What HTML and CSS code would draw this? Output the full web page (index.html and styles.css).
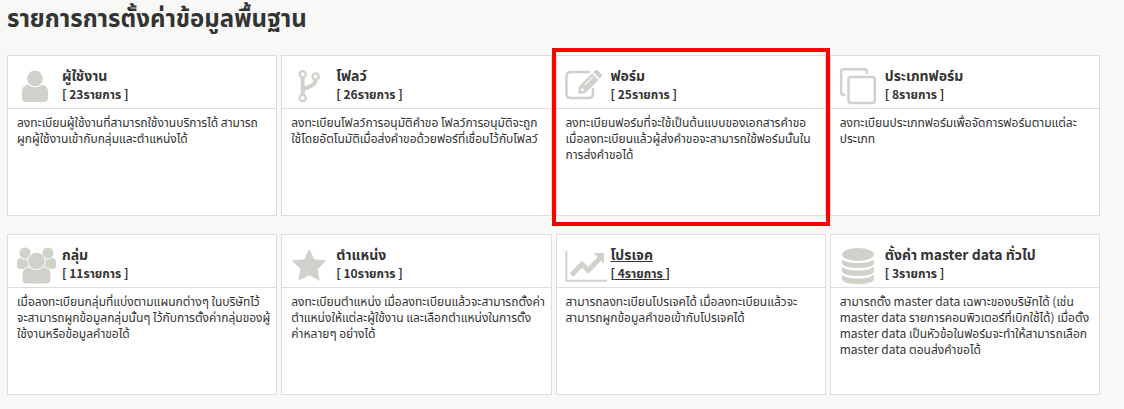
FILE: index.html
```html
<!DOCTYPE html>
<html lang="th">
<head>
    <meta charset="UTF-8">
    <title>รายการการตั้งค่าข้อมูลพื้นฐาน</title>
    <link rel="stylesheet" href="styles.css">
</head>
<body>
    <main>
        <h1>รายการการตั้งค่าข้อมูลพื้นฐาน</h1>
        <div class="cards">
            <section class="card">
                <header>
                    <svg class="icon" viewBox="0 0 42 42">
                        <path d="M6 33V27C6 22 9 20 12 20Q19 24 26 20C29 20 32 22 32 27V33Q32 37 28 37H10Q6 37 6 33Z"/>
                        <circle class="halo" cx="19" cy="13.5" r="8.3"/>
                    </svg>
                    <div class="name">
                        <h2><a href="#">ผู้ใช้งาน</a></h2>
                        <p>[<a href="#"> 23รายการ </a>]</p>
                    </div>
                </header>
                <p class="text">ลงทะเบียนผู้ใช้งานที่สามารถใช้งานบริการได้ สามารถ<br>ผูกผู้ใช้งานเข้ากับกลุ่มและตำแหน่งได้</p>
            </section>
            <section class="card">
                <header>
                    <svg class="icon" viewBox="0 0 42 42">
                        <path class="line branch" d="M12.7 12V30M25.7 14C25.7 22 18 20.5 12.7 25"/>
                        <g class="line ring">
                            <circle cx="12.7" cy="9.3" r="3.1"/>
                            <circle cx="25.7" cy="11.5" r="3.1"/>
                            <circle cx="12.7" cy="33" r="3.1"/>
                        </g>
                    </svg>
                    <div class="name">
                        <h2><a href="#">โฟลว์</a></h2>
                        <p>[<a href="#"> 26รายการ </a>]</p>
                    </div>
                </header>
                <p class="text">ลงทะเบียนโฟลว์การอนุมัติคำขอ โฟลว์การอนุมัติจะถูก<br>ใช้โดยอัตโนมัติเมื่อส่งคำขอด้วยฟอร์ที่เชื่อมไว้กับโฟลว์</p>
            </section>
            <section class="card current">
                <header>
                    <svg class="icon" viewBox="0 0 42 42">
                        <path class="line" d="M25 7H6Q1.4 7 1.4 11.6V28.4Q1.4 33 6 33H23.5Q28 33 28 28.4V23"/>
                        <path d="M13 29L14 21.5L27 8.5L33.5 15L20.5 28ZM28.3 7.2L30.3 5.3Q31.5 4.3 32.7 5.3L36.5 9.2Q37.5 10.4 36.5 11.6L34.7 13.6Z"/>
                        <path class="cut" d="M16.5 22.5L19.5 25.5L16 26.3ZM19.5 19.5L27.2 11.7L28 12.5L20.3 20.3Z"/>
                    </svg>
                    <div class="name">
                        <h2><a href="#">ฟอร์ม</a></h2>
                        <p>[<a href="#"> 25รายการ </a>]</p>
                    </div>
                </header>
                <p class="text">ลงทะเบียนฟอร์มที่จะใช้เป็นต้นแบบของเอกสารคำขอ<br>เมื่อลงทะเบียนแล้วผู้ส่งคำขอจะสามารถใช้ฟอร์มนั้นใน<br>การส่งคำขอได้</p>
            </section>
            <section class="card">
                <header>
                    <svg class="icon" viewBox="0 0 42 42">
                        <path class="line" d="M6.5 29.7H4.5Q2.2 29.7 2.2 27.4V6.5Q2.2 4.2 4.5 4.2H25.5Q27.8 4.2 27.8 6.5V9"/>
                        <rect class="line" x="9.5" y="12" width="26.3" height="26" rx="2.5"/>
                    </svg>
                    <div class="name">
                        <h2><a href="#">ประเภทฟอร์ม</a></h2>
                        <p>[<a href="#"> 8รายการ </a>]</p>
                    </div>
                </header>
                <p class="text">ลงทะเบียนประเภทฟอร์มเพื่อจัดการฟอร์มตามแต่ละ<br>ประเภท</p>
            </section>
            <section class="card">
                <header>
                    <svg class="icon" viewBox="0 0 42 42">
                        <path d="M1 22V19Q1 14 5 14H14V25H4Q1 25 1 22ZM40 22V19Q40 14 36 14H27V25H37Q40 25 40 22Z"/>
                        <circle class="halo" cx="9" cy="9" r="6"/>
                        <circle class="halo" cx="32" cy="9" r="6"/>
                        <path class="halo" d="M6 36V31C6 26 9 23 13 23H28C32 23 35 26 35 31V36Q35 40 31 40H10Q6 40 6 36Z"/>
                        <circle class="halo" cx="20.5" cy="17" r="8.8"/>
                    </svg>
                    <div class="name">
                        <h2><a href="#">กลุ่ม</a></h2>
                        <p>[<a href="#"> 11รายการ </a>]</p>
                    </div>
                </header>
                <p class="text">เมื่อลงทะเบียนกลุ่มที่แบ่งตามแผนกต่างๆ ในบริษัทไว้<br>จะสามารถผูกข้อมูลกลุ่มนั้นๆ ไว้กับการตั้งค่ากลุ่มของผู้<br>ใช้งานหรือข้อมูลคำขอได้</p>
            </section>
            <section class="card">
                <header>
                    <svg class="icon" viewBox="0 0 42 42">
                        <path d="M19.3 5L24.3 15.3L36.3 16.5L27.7 25L29.7 37L19.3 31.3L8.2 37L10.5 25L2 16.5L14.3 15.3Z"/>
                    </svg>
                    <div class="name">
                        <h2><a href="#">ตำแหน่ง</a></h2>
                        <p>[<a href="#"> 10รายการ </a>]</p>
                    </div>
                </header>
                <p class="text">ลงทะเบียนตำแหน่ง เมื่อลงทะเบียนแล้วจะสามารถตั้งค่า<br>ตำแหน่งให้แต่ละผู้ใช้งาน และเลือกตำแหน่งในการตั้ง<br>ค่าหลายๆ อย่างได้</p>
            </section>
            <section class="card hover">
                <header>
                    <svg class="icon" viewBox="0 0 42 42">
                        <path class="line axis" d="M1.3 6.7V36.7H42"/>
                        <path class="line trend" d="M6.5 31L17 20.2L23.3 26.5L35 14"/>
                        <path d="M28.5 9H39V19.5Z"/>
                    </svg>
                    <div class="name">
                        <h2><a href="#">โปรเจค</a></h2>
                        <p>[<a href="#"> 4รายการ </a>]</p>
                    </div>
                </header>
                <p class="text">สามารถลงทะเบียนโปรเจคได้ เมื่อลงทะเบียนแล้วจะ<br>สามารถผูกข้อมูลคำขอเข้ากับโปรเจคได้</p>
            </section>
            <section class="card">
                <header>
                    <svg class="icon" viewBox="0 0 42 42">
                        <ellipse cx="19" cy="10.5" rx="16" ry="6.5"/>
                        <path d="M3 15.5Q8 19 19 19T35 15.5V19Q34 24 19 24T3 19ZM3 23Q8 26.5 19 26.5T35 23V27Q34 32 19 32T3 27ZM3 31Q8 34.5 19 34.5T35 31V35Q34 40 19 40T3 35Z"/>
                    </svg>
                    <div class="name">
                        <h2><a href="#">ตั้งค่า master data ทั่วไป</a></h2>
                        <p>[<a href="#"> 3รายการ </a>]</p>
                    </div>
                </header>
                <p class="text">สามารถตั้ง master data เฉพาะของบริษัทได้ (เช่น<br>master data รายการคอมพิวเตอร์ที่เบิกใช้ได้) เมื่อตั้ง<br>master data เป็นหัวข้อในฟอร์มจะทำให้สามารถเลือก<br>master data ตอนส่งคำขอได้</p>
            </section>
        </div>
    </main>
</body>
</html>
```
FILE: styles.css
```css
* {
    padding: 0;
    margin: 0;
    box-sizing: border-box;
}

body {
    background: #f8f8f6;
    color: #333;
    font-family: "Noto Sans CJK SC", "Noto Sans Thai", sans-serif;
    font-size: 12px;
}

main {
    padding: 3px 24px 12px 7px;
}

h1 {
    font-size: 24px;
    line-height: 28px;
    margin-bottom: 24px;
}

.cards {
    display: grid;
    grid-template-columns: repeat(4, minmax(0, 1fr));
    gap: 18px 4px;
}

.card {
    position: relative;
    min-height: 161px;
    background: #fff;
    border: 1px solid #ddd;
}

.card header {
    display: flex;
    gap: 4px;
    height: 53px;
    padding: 9px 8px 0;
    border-bottom: 1px solid #ddd;
}

.icon {
    flex: none;
    width: 42px;
    height: 42px;
    fill: #d0d1cb;
}

.icon .halo {
    stroke: #fff;
    stroke-width: 1;
}

.icon .cut {
    fill: #fff;
}

.icon .line {
    fill: none;
    stroke: #d0d1cb;
    stroke-width: 2.5;
}

.icon .ring {
    fill: #fff;
    stroke-width: 2.3;
}

.icon .branch {
    stroke-width: 4;
}

.icon .axis {
    stroke-width: 2;
}

.icon .trend {
    stroke-width: 5;
}

.name {
    white-space: nowrap;
    font-weight: bold;
}

.name h2 {
    font-size: 14px;
    line-height: 20px;
}

.name p {
    line-height: 18px;
}

.name a {
    color: #333;
    text-decoration: none;
}

.hover .name a {
    text-decoration: underline;
}

.text {
    padding: 5px 9px;
    line-height: 16px;
    white-space: nowrap;
}

/* กรอบแดงรอบการ์ดที่เลือก */
.current::after {
    content: "";
    position: absolute;
    top: -8px;
    right: -5px;
    bottom: -11px;
    left: -5px;
    border: 4px solid #f00;
}
```
